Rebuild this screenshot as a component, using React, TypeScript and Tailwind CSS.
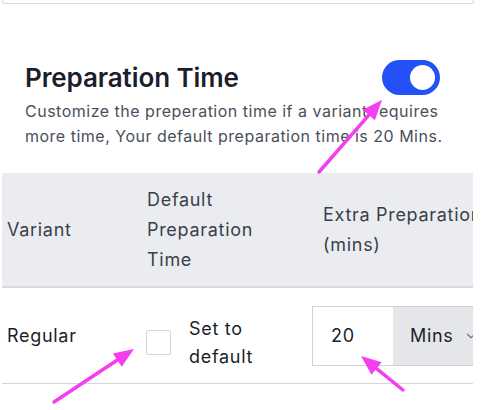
import { ChevronDown } from "lucide-react";

const font = { fontFamily: "Inter, 'Noto Sans', sans-serif" };

function Arrow({ x1, y1, x2, y2 }: { x1: number; y1: number; x2: number; y2: number }) {
  const dx = x2 - x1;
  const dy = y2 - y1;
  const len = Math.hypot(dx, dy);
  const ux = dx / len;
  const uy = dy / len;
  const bx = x2 - ux * 20;
  const by = y2 - uy * 20;
  const px = -uy * 8;
  const py = ux * 8;
  return (
    <g>
      <line x1={x1} y1={y1} x2={bx} y2={by} stroke="#f43ef0" strokeWidth={3.5} strokeLinecap="round" />
      <polygon points={`${x2},${y2} ${bx + px},${by + py} ${bx - px},${by - py}`} fill="#f43ef0" />
    </g>
  );
}

export default function App() {
  return (
    <div className="relative h-[410px] w-[500px] overflow-hidden bg-white" style={font}>
      {/* bottom edge of the card above */}
      <div className="ml-[2px] h-[4px] w-[472px] rounded-b-[3px] border border-t-0 border-[#d9dbe0]" />

      <section className="mt-[56px] pl-[25px] pr-[60px]">
        <div className="flex h-[35px] items-center justify-between">
          <h2 className="text-[26px] font-semibold leading-[32px] tracking-[-0.1px] text-[#1b1f2b]">
            Preparation Time
          </h2>
          <button
            type="button"
            className="flex h-[35px] w-[58px] items-center justify-end rounded-full bg-[#2451f5] pr-[5px]"
          >
            <span className="h-[25px] w-[25px] rounded-full bg-white" />
          </button>
        </div>
        <p className="mt-[4px] w-[420px] text-[16px] leading-[25px] tracking-[0.5px] text-[#4a4f5c]">
          Customize the preperation time if a variant requires more time, Your default preparation time is 20 Mins.
        </p>
      </section>

      <div className="ml-[2px] mt-[24px] w-[471px] overflow-hidden tracking-[0.7px]">
        {/* header */}
        <div className="grid h-[115px] grid-cols-[140px_170px_1fr] items-center border-b-2 border-[#d7d9de] bg-[#ebecf0] text-[18px] leading-[30px] text-[#3a3f4c]">
          <div className="pl-[5px]">Variant</div>
          <div className="w-[150px] pl-[5px]">Default Preparation Time</div>
          <div className="w-[220px] pl-[11px]">
            <span className="whitespace-nowrap">Extra Preparation</span>
            <br />
            (mins)
          </div>
        </div>

        {/* row */}
        <div className="grid h-[96px] grid-cols-[140px_170px_1fr] items-center border-b border-[#d4d6dc] text-[18px] text-[#1c1f27]">
          <div className="pl-[5px]">Regular</div>
          <div className="mt-[14px] flex items-center gap-[18px] pl-[4px]">
            <span className="h-[25px] w-[25px] flex-none rounded-[2px] border border-[#d3d5da] bg-white" />
            <span className="w-[100px] leading-[28px]">Set to default</span>
          </div>
          <div className="flex h-[60px] w-[200px] flex-none border border-[#cfd2d8]">
            <div className="flex w-[80px] flex-none items-center pl-[18px]">20</div>
            <div className="flex flex-1 items-center bg-[#e5e6ea] pl-[17px]">
              <span>Mins</span>
              <ChevronDown size={14} strokeWidth={2} className="ml-[10px] text-[#6b7080]" />
            </div>
          </div>
        </div>
      </div>

      <svg className="pointer-events-none absolute left-0 top-0" width={500} height={410}>
        <Arrow x1={319} y1={172} x2={382} y2={100} />
        <Arrow x1={54} y1={402} x2={134} y2={349} />
        <Arrow x1={403} y1={390} x2={361} y2={356} />
      </svg>
    </div>
  );
}
